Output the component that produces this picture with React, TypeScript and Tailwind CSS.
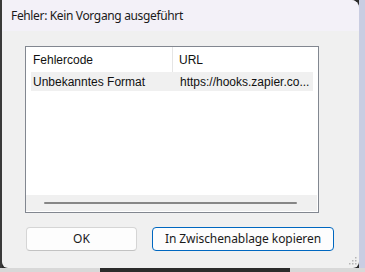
import React from "react";

export default function App() {
  return (
    <div className="w-[365px] h-[272px] overflow-hidden bg-[#2b2b2b] flex flex-col">
      <div className="flex h-[268px] shrink-0">
        <div className="w-[2px] bg-[#3a3a3a]" />
        <div
          className="w-[357px] h-[268px] bg-[#f0f0f0] rounded-tr-[8px] rounded-b-[6px] overflow-hidden flex flex-col"
          style={{ fontFamily: '"Noto Sans", "Open Sans", sans-serif' }}
        >
          <div className="h-[31px] bg-[#f3f1f8] flex items-center pl-[9px] text-[12px] tracking-[-0.35px] text-[#1a1a1a] shrink-0">
            Fehler: Kein Vorgang ausgeführt
          </div>
          <div className="flex-1 flex flex-col pl-[23px] pt-[15px] relative">
            <div
              className="w-[294px] h-[167px] border border-[#828790] bg-white flex flex-col"
              style={{ fontFamily: '"Liberation Sans", Arial, sans-serif' }}
            >
              <div className="h-[25px] flex text-[12px] text-[#111] shrink-0">
                <div className="w-[147px] border-r border-[#e5e5e5] flex items-center pl-[7px]">Fehlercode</div>
                <div className="flex items-center pl-[6px]">URL</div>
              </div>
              <div className="mx-[5px] h-[19px] bg-[#f0f0f0] flex items-center text-[12px] text-[#111]">
                <div className="w-[149px] pl-[2px]">Unbekanntes Format</div>
                <div>https://hooks.zapier.co...</div>
              </div>
              <div className="flex-1" />
              <div className="h-[16px] bg-[#f0f0f0] mr-[1px] mb-[1px] flex items-center pl-[18px]">
                <div className="w-[253px] h-[2px] bg-[#868686] rounded-full" />
              </div>
            </div>
            <div className="flex gap-[15px] mt-[14px] pl-[1px]" style={{ fontFamily: '"Noto Sans", "Open Sans", sans-serif' }}>
              <div className="w-[111px] h-[24px] bg-[#fdfdfd] border border-[#d5d5d5] border-b-[#c2c2c2] rounded-[4px] flex items-center justify-center text-[12px] text-[#1a1a1a]">
                OK
              </div>
              <div className="w-[182px] h-[24px] bg-[#fdfdfd] border border-[#0067c0] rounded-[4px] flex items-center justify-center text-[12px] tracking-[-0.08px] text-[#1a1a1a]">
                In Zwischenablage kopieren
              </div>
            </div>
            <div className="absolute right-[2px] bottom-[3px]">
              <svg width="8" height="8" viewBox="0 0 8 8">
                <rect x="6" y="0" width="1.5" height="1.5" fill="#b5b5b5" />
                <rect x="3" y="3" width="1.5" height="1.5" fill="#b5b5b5" />
                <rect x="6" y="3" width="1.5" height="1.5" fill="#b5b5b5" />
                <rect x="0" y="6" width="1.5" height="1.5" fill="#b5b5b5" />
                <rect x="3" y="6" width="1.5" height="1.5" fill="#b5b5b5" />
                <rect x="6" y="6" width="1.5" height="1.5" fill="#b5b5b5" />
              </svg>
            </div>
          </div>
        </div>
        <div className="flex-1 bg-[#c9cde2]" />
      </div>
      <div className="flex-1 flex">
        <div className="w-[100px] bg-[#d8d8d8]" />
        <div className="w-[190px] bg-[#2b2b2b]" />
        <div className="flex-1 bg-[#d8d8d8]" />
      </div>
    </div>
  );
}
